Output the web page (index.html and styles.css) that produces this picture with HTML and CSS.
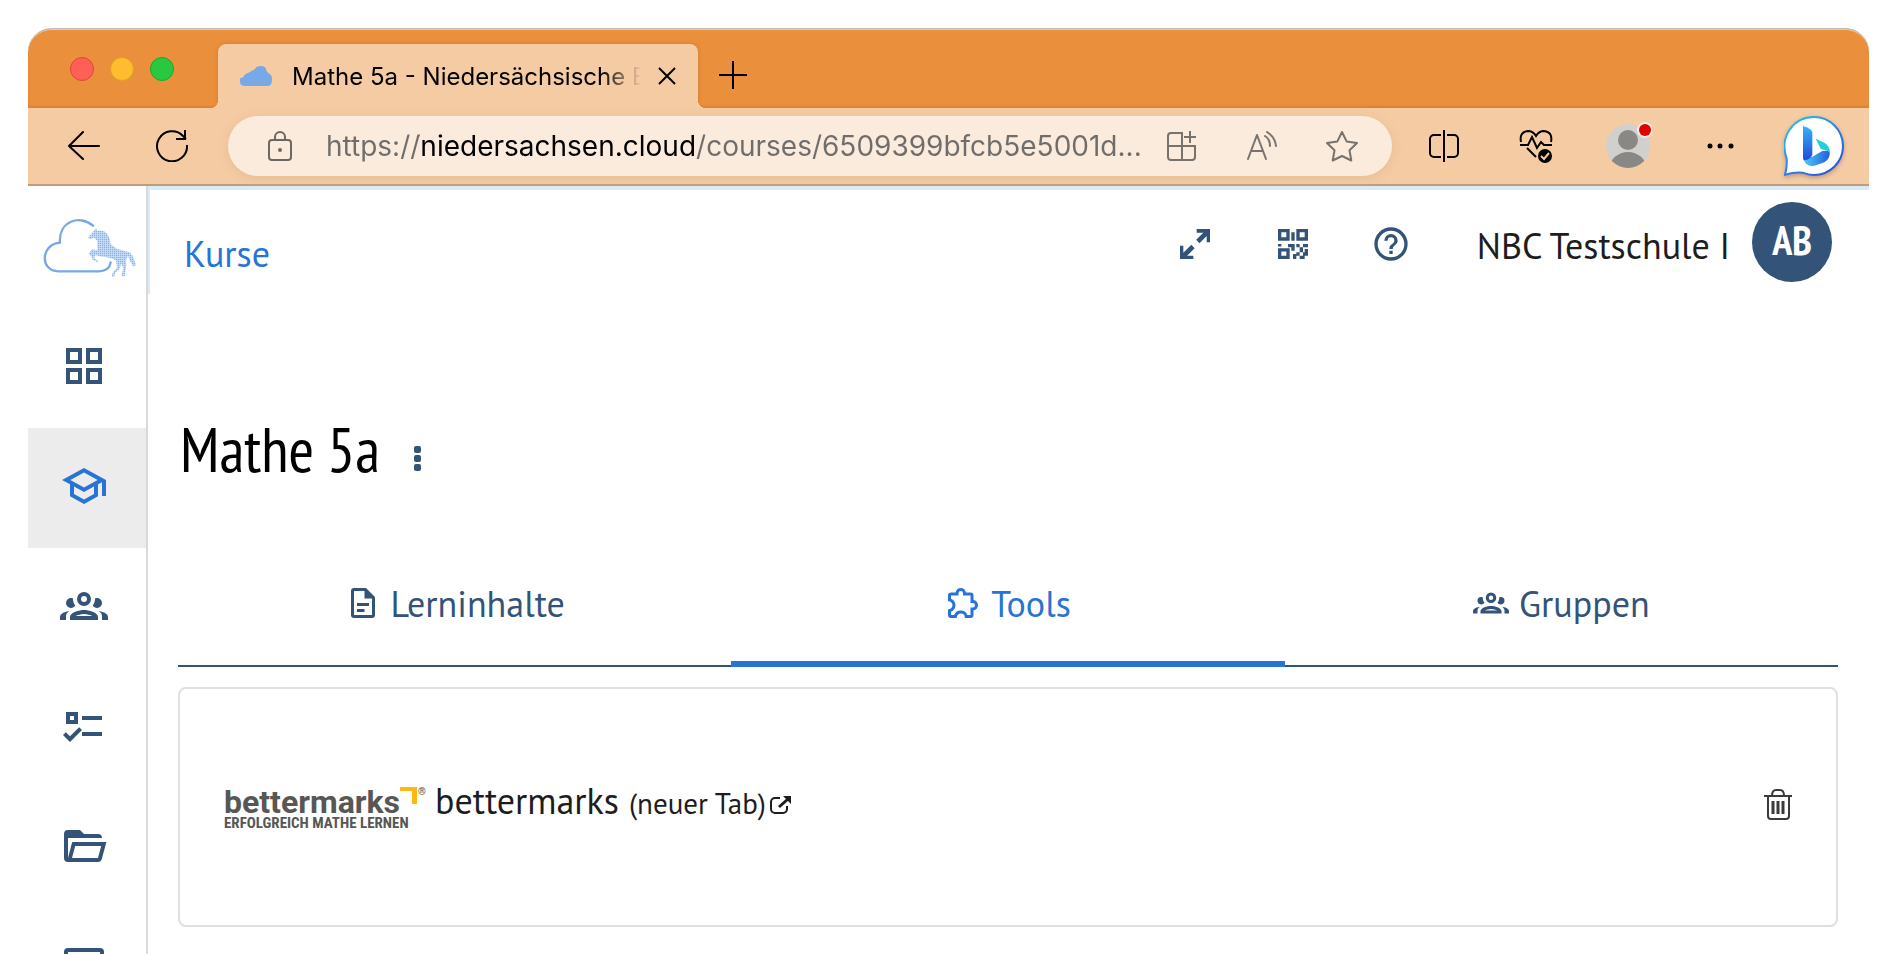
FILE: index.html
```html
<!DOCTYPE html>
<html lang="de">
<head>
    <meta charset="UTF-8">
    <meta name="viewport" content="width=device-width, initial-scale=1.0">
    <title>Mathe 5a - Niedersächsische Bildungscloud</title>
    <link rel="stylesheet" href="styles.css">
</head>
<body>
    <div class="browser">
        <!-- Tab strip -->
        <div class="titlebar">
            <div class="lights">
                <span class="light red"></span>
                <span class="light yellow"></span>
                <span class="light green"></span>
            </div>
            <div class="browser-tab">
                <svg class="favicon" viewBox="0 0 32 20"><path d="M5 20C2 20 0 18.500 0 16V13Q0 11.500 3 11.500Q4 8 9 6.500L15 3Q16 0 21 0Q26 0 26.500 5Q28 7.500 31 9Q32 10 32 13Q32 20 28 20Z" fill="#77a9e6"/></svg>
                <span class="tab-title">Mathe 5a - Niedersächsische Bildungscloud</span>
                <button class="tab-close" aria-label="Tab schließen">
                    <svg width="18" height="18" viewBox="0 0 18 18" fill="none" stroke="#000" stroke-width="2"><path d="M1 1l16 16M17 1L1 17"/></svg>
                </button>
            </div>
            <button class="new-tab" aria-label="Neuer Tab">
                <svg width="28" height="28" viewBox="0 0 28 28" fill="none" stroke="#000" stroke-width="2"><path d="M14 0v28M0 14h28"/></svg>
            </button>
        </div>

        <!-- Address bar -->
        <div class="toolbar">
            <div class="nav-buttons">
                <button class="tool" aria-label="Zurück">
                    <svg width="32" height="30" viewBox="0 0 32 30" fill="none" stroke="#000" stroke-width="2" stroke-linecap="round" stroke-linejoin="round"><path d="M31 15H1M15 1L1 15l14 13"/></svg>
                </button>
                <button class="tool" aria-label="Neu laden">
                    <svg width="32" height="32" viewBox="0 0 32 32" fill="none" stroke="#000" stroke-width="2"><path d="M31 15a15 15 0 1 1-4-9l3 3M29 0v9h-9"/></svg>
                </button>
            </div>
            <div class="address">
                <svg width="24" height="30" viewBox="0 0 24 30" fill="none" stroke="#6b6863" stroke-width="2"><rect x="1" y="9" width="22" height="20" rx="3"/><path d="M7 9V6a5 5 0 0 1 10 0v3"/><circle cx="12" cy="19" r="2" fill="#6b6863" stroke="none"/></svg>
                <input class="url" type="text" aria-label="Adresse" value="https://niedersachsen.cloud/courses/6509399bfcb5e5001d...">
                <button class="tool" aria-label="App verfügbar">
                    <svg width="30" height="30" viewBox="0 0 30 30" fill="none" stroke="#76726d" stroke-width="2"><path d="M15 29V2H4a3 3 0 0 0-3 3v21a3 3 0 0 0 3 3h21a3 3 0 0 0 3-3V15H1M23 0v12M17 6h12"/></svg>
                </button>
                <button class="tool" aria-label="Laut vorlesen">
                    <svg width="30" height="30" viewBox="0 0 30 30" fill="none" stroke="#76726d" stroke-width="2" stroke-linecap="round" stroke-linejoin="round"><path d="M1 28L10 4l9 24M4 20h12M18 5q5 3 5 10M20 1q8 5 9 14"/></svg>
                </button>
                <button class="tool" aria-label="Favorit">
                    <svg width="34" height="32" viewBox="0 0 34 32" fill="none" stroke="#76726d" stroke-width="2" stroke-linejoin="round"><path d="M17 2l4.600 9.400L32 13l-7.500 7.300L26.300 30.500 17 26l-9.300 4.500 1.800-10.200L2 13l10.400-1.600z"/></svg>
                </button>
            </div>
            <div class="extras">
                <button class="tool" aria-label="Geteilter Bildschirm">
                    <svg width="30" height="32" viewBox="0 0 30 32" fill="none" stroke="#000" stroke-width="2"><path d="M15 0v32M12 5H5a4 4 0 0 0-4 4v14a4 4 0 0 0 4 4h7M18 5h7a4 4 0 0 1 4 4v14a4 4 0 0 1-4 4h-7"/></svg>
                </button>
                <button class="tool" aria-label="Browser-Essentials">
                    <svg width="34" height="34" viewBox="0 0 34 34" fill="none" stroke="#000" stroke-width="2"><path d="M2 13Q0 3 9 2q5 0 8 5 3-5 8-5 9 1 7 11M1 16h8l4-8 5 11 4-6 3 3h8M8 19l9 9"/><circle cx="26" cy="27" r="7" fill="#000" stroke="none"/><path d="M22 27l3 3 5-6" stroke="#f5cba4"/></svg>
                </button>
                <button class="tool" aria-label="Profil">
                    <svg width="48" height="48" viewBox="0 0 48 48"><defs><clipPath id="face"><circle cx="24" cy="24" r="22"/></clipPath></defs><circle cx="24" cy="24" r="22" fill="#d2d0cc"/><g clip-path="url(#face)" fill="#8a8884"><circle cx="24" cy="18" r="10"/><ellipse cx="24" cy="45" rx="18" ry="15"/></g><circle cx="41" cy="8" r="8" fill="#f4ece6"/><circle cx="41" cy="8" r="6" fill="#e30000"/></svg>
                </button>
                <button class="tool" aria-label="Menü">
                    <svg width="28" height="6" viewBox="0 0 28 6"><circle cx="4" cy="3" r="2.500"/><circle cx="14" cy="3" r="2.500"/><circle cx="25" cy="3" r="2.500"/></svg>
                </button>
                <button class="tool bing" aria-label="Bing">
                    <svg width="60" height="60" viewBox="0 0 180 180">
                        <defs>
                            <linearGradient id="rim" x1="0" y1="0" x2="1" y2="1"><stop offset="0" stop-color="#1fd0ea"/><stop offset=".5" stop-color="#2f80ee"/><stop offset="1" stop-color="#1c4fd8"/></linearGradient>
                            <linearGradient id="stem" x1="0" y1="0" x2="0" y2="1"><stop offset="0" stop-color="#37b4f8"/><stop offset="1" stop-color="#2048d8"/></linearGradient>
                            <linearGradient id="bowl" x1="0" y1="0" x2="1" y2="0"><stop offset="0" stop-color="#50c8f8"/><stop offset="1" stop-color="#2060e0"/></linearGradient>
                        </defs>
                        <path d="M3 176Q10 152 8 128C-16 60 30 3 90 3c48 0 87 39 87 87s-39 87-87 87Q72 177 56 170 30 168 3 176z" fill="#fff" stroke="url(#rim)" stroke-width="6"/>
                        <path d="M60 128l25-6 30-17 22 0q4 22-16 34L96 148q-30 8-38-20z" fill="url(#bowl)"/>
                        <path d="M57 30q24 8 28 18v68q-4 12-22 17-6 0-6-7z" fill="url(#stem)"/>
                        <path d="M95 68l26 12q18 10 17 34-5-10-16-11l-12-5z" fill="#23cfdf"/>
                    </svg>
                </button>
            </div>
        </div>

        <!-- Page -->
        <div class="page">
            <nav class="sidebar">
                <a class="logo" href="#" aria-label="Startseite">
                    <svg width="95" height="61" viewBox="66 108 285 183">
                        <defs><pattern id="dots" width="6" height="6" patternUnits="userSpaceOnUse"><rect width="6" height="6" fill="#d3e4f9"/><rect width="4" height="4" fill="#86b2ea"/></pattern></defs>
                        <path d="M219 134C180 100 115 120 120 185C60 190 60 271 115 271H235Q268 271 272 244" fill="none" stroke="#77a9e6" stroke-width="7" stroke-linecap="round"/>
                        <path d="M204 170L216 155 228 142 232 149Q254 146 262 160 272 174 272 190L290 203 316 211 328 213 338 224 348 252 340 257 330 240 324 224 318 238 319 252 314 286H304L310 262 303 247 300 262 286 275 282 287H275L278 275 291 260 288 238 268 230 240 226 226 222 222 232 236 241 232 243 218 236 214 226 206 218 216 205 232 208V180L222 170 210 175z" fill="url(#dots)"/>
                    </svg>
                </a>
                <a class="nav-item" href="#" aria-label="Übersicht"><svg viewBox="0 0 24 24"><path d="M3 11h8V3H3zm2-6h4v4H5zM13 3v8h8V3zm6 6h-4V5h4zM3 21h8v-8H3zm2-6h4v4H5zM13 21h8v-8h-8zm2-6h4v4h-4z"/></svg></a>
                <a class="nav-item active" href="#" aria-label="Kurse"><svg viewBox="0 0 24 24"><path d="M12 3 1 9l4 2.180v6L12 21l7-3.820v-6l2-1.090V17h2V9L12 3m6.820 6L12 12.720 5.180 9 12 5.280 18.820 9M17 16l-5 2.720L7 16v-3.730L12 15l5-2.730V16z"/></svg></a>
                <a class="nav-item" href="#" aria-label="Teams"><svg viewBox="0 0 24 24"><use href="#group"/></svg></a>
                <a class="nav-item" href="#" aria-label="Aufgaben"><svg viewBox="0 0 24 24"><path d="M3 5h6v6H3V5m2 2v2h2V7H5m6 0h10v2H11V7m0 8h10v2H11v-2m-6 5-3.500-3.500 1.410-1.410L5 17.170l4.590-4.580L11 14l-6 6z"/></svg></a>
                <a class="nav-item" href="#" aria-label="Dateien"><svg viewBox="0 0 24 24"><path d="M6.100 10 4 18V8h17a2 2 0 0 0-2-2h-7l-2-2H4a2 2 0 0 0-2 2v12a2 2 0 0 0 2 2h15c.9 0 1.700-.6 1.900-1.500L23.200 10H6.100M19 18H6l1.600-6h13L19 18z"/></svg></a>
                <a class="nav-item" href="#" aria-label="Neuigkeiten"><svg viewBox="0 0 24 24"><path d="M4 3h16a2 2 0 0 1 2 2v14a2 2 0 0 1-2 2H4a2 2 0 0 1-2-2V5a2 2 0 0 1 2-2m0 2v14h16V5z"/></svg></a>
            </nav>

            <main class="main">
                <header class="topbar">
                    <a class="breadcrumb" href="#">Kurse</a>
                    <div class="top-actions">
                        <button class="action" aria-label="Vollbild"><svg viewBox="0 0 24 24"><path d="M13 3H21v8h-2V7.200L14.700 11.500l-2-2L17 5.200H13zM3 13h2v4.300l4.800-4.800 2 2L7.300 19H11v2H3z"/></svg></button>
                        <button class="action" aria-label="QR-Code">
                            <svg viewBox="0 0 24 24"><path fill-rule="evenodd" d="M3 3h7v7H3zm2 2v3h3V5zM14 3h7v7h-7zm2 2v3h3V5zM3 14.500h7V21H3zm2 2V19h3v-2.500zM11 5h2v5h-2zM3 12h2v1.500H3zM9 12h4v4h-2v-2H9zM14 12h2v2h-2zM16 14h2v3h-2zM18 12h3v2h-3zM14 17h2v2h-2v2h-2v-3h2zM18 17h1v-2h2v4h-2v2h-3v-2h2z"/></svg>
                        </button>
                        <button class="action" aria-label="Hilfe"><svg viewBox="0 0 24 24"><path d="M11 18h2v-2h-2v2m1-16a10 10 0 1 0 0 20 10 10 0 0 0 0-20m0 18c-4.410 0-8-3.590-8-8s3.590-8 8-8 8 3.590 8 8-3.590 8-8 8m0-14a4 4 0 0 0-4 4h2a2 2 0 0 1 4 0c0 2-3 1.750-3 5h2c0-2.250 3-2.500 3-5a4 4 0 0 0-4-4z"/></svg></button>
                    </div>
                    <span class="school">NBC Testschule I</span>
                    <button class="avatar">AB</button>
                </header>

                <div class="content">
                    <div class="title-row">
                        <h1>Mathe 5a</h1>
                        <button class="more" aria-label="Kursmenü"><svg width="8" height="26" viewBox="0 0 8 26"><rect width="7" height="7" rx="2"/><rect y="9" width="7" height="7" rx="2"/><rect y="18" width="7" height="7" rx="2"/></svg></button>
                    </div>

                    <div class="tabs" role="tablist">
                        <button class="tab" role="tab"><svg viewBox="0 0 24 24"><path d="M6 2h8l6 6v12a2 2 0 0 1-2 2H6a2 2 0 0 1-2-2V4a2 2 0 0 1 2-2m0 2v16h12V9h-5V4zm2 8h8v2H8zm0 4h5v2H8z"/></svg>Lerninhalte</button>
                        <button class="tab selected" role="tab" aria-selected="true"><svg viewBox="0 0 24 24"><path d="M22 13.500c0 1.760-1.300 3.220-3 3.460V20a2 2 0 0 1-2 2h-3.800v-.3a2.700 2.700 0 0 0-2.700-2.700c-1.500 0-2.700 1.210-2.700 2.700v.3H4a2 2 0 0 1-2-2v-3.800h.3C3.790 16.200 5 15 5 13.500S3.790 10.800 2.300 10.800H2V7a2 2 0 0 1 2-2h3.040C7.280 3.300 8.740 2 10.500 2s3.220 1.300 3.460 3H17a2 2 0 0 1 2 2v3.040c1.700.24 3 1.700 3 3.460M17 15h1.500a1.500 1.500 0 0 0 0-3H17V7h-5V5.500a1.500 1.500 0 0 0-3 0V7H4v2.120c1.760.68 3 2.380 3 4.380s-1.250 3.700-3 4.380V20h2.120a4.700 4.700 0 0 1 8.760 0H17v-5z"/></svg>Tools</button>
                        <button class="tab" role="tab"><svg viewBox="0 0 24 24"><path id="group" d="M12,5A3.5,3.5 0 0,0 8.5,8.5A3.5,3.5 0 0,0 12,12A3.5,3.5 0 0,0 15.5,8.5A3.5,3.5 0 0,0 12,5M12,7A1.5,1.5 0 0,1 13.5,8.5A1.5,1.5 0 0,1 12,10A1.5,1.5 0 0,1 10.5,8.5A1.5,1.5 0 0,1 12,7M5.5,8A2.5,2.5 0 0,0 3,10.5C3,11.44 3.53,12.25 4.29,12.68C4.65,12.88 5.06,13 5.5,13C5.94,13 6.35,12.88 6.71,12.68C7.08,12.47 7.39,12.17 7.62,11.81C6.89,10.86 6.5,9.7 6.5,8.5C6.5,8.41 6.5,8.31 6.5,8.22C6.2,8.08 5.86,8 5.5,8M18.5,8C18.14,8 17.8,8.08 17.5,8.22C17.5,8.31 17.5,8.41 17.5,8.5C17.5,9.7 17.11,10.86 16.38,11.81C16.5,12 16.63,12.15 16.78,12.3C16.94,12.45 17.1,12.58 17.29,12.68C17.65,12.88 18.06,13 18.5,13C18.94,13 19.35,12.88 19.71,12.68C20.47,12.25 21,11.44 21,10.5A2.5,2.5 0 0,0 18.5,8M12,14C9.66,14 5,15.17 5,17.5V19H19V17.5C19,15.17 14.34,14 12,14M4.71,14.55C2.78,14.78 0,15.76 0,17.5V19H3V17.07C3,16.06 3.69,15.22 4.71,14.55M19.29,14.55C20.31,15.22 21,16.06 21,17.07V19H24V17.5C24,15.76 21.22,14.78 19.29,14.55M12,16C13.53,16 15.24,16.5 16.23,17H7.77C8.76,16.5 10.47,16 12,16Z"/></svg>Gruppen</button>
                    </div>

                    <div class="tool-card">
                        <a class="tool-link" href="#">
                            <span class="brand">
                                <span class="brand-name">bettermarks<svg class="corner" width="18" height="18" viewBox="0 0 18 18"><path d="M0 0h17v17h-5V4H0z" fill="#fdb913"/></svg><span class="reg">®</span></span>
                                <span class="brand-claim">ERFOLGREICH MATHE LERNEN</span>
                            </span>
                            <span class="tool-name">bettermarks</span>
                            <span class="tool-hint">(neuer Tab)</span>
                            <svg width="22" height="18" viewBox="0 0 22 18" fill="none" stroke="#1d1d1d" stroke-width="2"><path d="M10 2H5a4 4 0 0 0-4 4v7a4 4 0 0 0 4 4h8a4 4 0 0 0 4-4v-3"/><path d="M9 11l9-8" stroke-width="3"/><path d="M13 0h8v8z" fill="#1d1d1d" stroke="none"/></svg>
                        </a>
                        <button class="delete" aria-label="Löschen">
                            <svg width="28" height="32" viewBox="0 0 28 32" fill="none" stroke="#3a3a3a" stroke-width="2"><path d="M0 7h28M8 7q0-6 4-6h4q4 0 4 6M4 7v20a3 3 0 0 0 3 3h15a3 3 0 0 0 3-3V7"/><path d="M9 12v13M14 12v13M19 12v13" stroke-width="3"/></svg>
                        </button>
                    </div>
                </div>
            </main>
        </div>
    </div>
</body>
</html>
```
FILE: styles.css
```css
* {
    box-sizing: border-box;
}

body {
    margin: 0;
    height: 100vh;
    padding: 28px 27px 0 28px;
    overflow: hidden;
    background-color: #fff;
    color: #1d1d1d;
    font-family: 'PT Sans', 'Open Sans', sans-serif;
}

button {
    display: flex;
    align-items: center;
    justify-content: center;
    padding: 0;
    border: none;
    background: none;
    color: inherit;
    font: inherit;
    cursor: pointer;
}

a {
    color: inherit;
    text-decoration: none;
}

.browser {
    display: flex;
    flex-direction: column;
    height: 100%;
}

/* Tab strip */
.titlebar {
    display: flex;
    flex-shrink: 0;
    height: 80px;
    padding-left: 42px;
    border-top: 1px solid #c0bab5;
    border-radius: 24px 24px 0 0;
    background-color: #ea8f3c;
    box-shadow: inset 0 1px 0 #f5c79b, inset 0 -2px 2px #d98337;
}

.lights {
    display: flex;
    gap: 16px;
    margin-right: 44px;
    padding-top: 28px;
}

.light {
    width: 24px;
    height: 24px;
    border: 1px solid;
    border-radius: 50%;
}

.red {
    background-color: #ff5f57;
    border-color: #e0443e;
}

.yellow {
    background-color: #febc2e;
    border-color: #dea123;
}

.green {
    background-color: #28c840;
    border-color: #1aab29;
}

.browser-tab {
    position: relative;
    display: flex;
    align-items: center;
    align-self: flex-end;
    width: 480px;
    height: 64px;
    padding: 0 22px;
    border-radius: 8px 8px 0 0;
    background-color: #f5cba4;
    box-shadow: 0 0 4px #cf7d34;
    clip-path: inset(-4px -8px 0 -8px);
}

/* flared feet of the active tab */
.browser-tab::before,
.browser-tab::after {
    content: '';
    position: absolute;
    bottom: 0;
    width: 8px;
    height: 8px;
}

.browser-tab::before {
    right: 100%;
    background: radial-gradient(circle at 0 0, transparent 8px, #f5cba4 8px);
}

.browser-tab::after {
    left: 100%;
    background: radial-gradient(circle at 100% 0, transparent 8px, #f5cba4 8px);
}

.favicon {
    flex-shrink: 0;
    width: 32px;
    height: 20px;
    margin-right: 20px;
}

.tab-title {
    flex: 1;
    overflow: hidden;
    color: #000;
    font-family: Inter, 'Liberation Sans', sans-serif;
    font-size: 24px;
    white-space: nowrap;
    mask-image: linear-gradient(to right, #000 calc(100% - 40px), transparent);
}

.tab-close {
    margin-left: 17px;
}

.new-tab {
    margin: 16px 0 0 21px;
    height: 60px;
}

/* Address bar */
.toolbar {
    display: flex;
    flex-shrink: 0;
    align-items: center;
    height: 78px;
    padding: 0 25px 0 32px;
    border-bottom: 2px solid #bf9c7c;
    background-color: #f5cba4;
}

.tool {
    flex-shrink: 0;
    width: 48px;
    height: 48px;
}

.nav-buttons {
    display: flex;
    gap: 40px;
    margin-right: 32px;
}

.address {
    display: flex;
    flex: 1;
    align-items: center;
    gap: 32px;
    height: 60px;
    padding: 0 26px 0 40px;
    border-radius: 30px;
    background-color: #fbebdd;
    box-shadow: 0 2px 12px #e6bc94;
}

/* the host part of the address is darker than the rest */
.url {
    flex: 1;
    min-width: 0;
    margin: 0 -16px 0 2px;
    padding: 0;
    border: none;
    outline: none;
    background: linear-gradient(to right, #6f6d6b 93px, #000 93px, #000 369px, #6f6d6b 369px);
    background-clip: text;
    color: transparent;
    font-family: Inter, 'Liberation Sans', sans-serif;
    font-size: 28px;
}

.extras {
    display: flex;
    align-items: center;
    gap: 44px;
    margin-left: 28px;
}

.bing {
    width: 60px;
    height: 60px;
    margin-left: -4px;
    filter: drop-shadow(0 2px 2px #c09a78);
}

/* Page */
.page {
    display: flex;
    flex: 1;
    min-height: 0;
    overflow: hidden;
}

.sidebar {
    flex-shrink: 0;
    width: 120px;
    border-right: 2px solid #d9d9d9;
}

.logo {
    display: flex;
    align-items: center;
    height: 122px;
    padding-left: 14px;
}

.nav-item {
    display: flex;
    align-items: center;
    justify-content: center;
    height: 120px;
    padding: 0 6px 4px 0;
    color: #335379;
}

.nav-item svg {
    width: 48px;
    height: 48px;
    fill: currentColor;
}

.nav-item.active {
    background-color: #ececec;
    color: #2774d6;
}

.main {
    flex: 1;
    border-top: 4px solid #d9ebf7;
}

.topbar {
    display: flex;
    align-items: center;
    height: 104px;
    padding: 0 37px 0 34px;
    border-left: 2px solid #d9ebf7;
    font-size: 36px;
}

.breadcrumb {
    padding-top: 22px;
    color: #2774d6;
}

.top-actions {
    display: flex;
    gap: 58px;
    margin-left: auto;
    padding-top: 4px;
    color: #335379;
}

.action svg {
    width: 40px;
    height: 40px;
    fill: currentColor;
}

.school {
    margin: 0 22px 0 66px;
    padding-top: 6px;
}

.avatar {
    width: 80px;
    height: 80px;
    padding-bottom: 4px;
    border-radius: 50%;
    background-color: #335379;
    color: #fff;
    font-family: 'PT Sans Narrow', 'PT Sans', 'Open Sans', sans-serif;
    font-size: 40px;
    font-weight: bold;
}

.content {
    padding: 0 31px 0 30px;
}

.title-row {
    display: flex;
    align-items: center;
    gap: 34px;
    height: 251px;
    padding: 58px 2px 0;
}

h1 {
    margin: 0;
    color: #000;
    font-family: 'PT Sans Narrow', 'Roboto Condensed', 'Open Sans', sans-serif;
    font-size: 62px;
    font-weight: normal;
}

.more {
    padding-top: 20px;
    fill: #335379;
}

.tabs {
    display: grid;
    grid-template-columns: repeat(3, 1fr);
    box-shadow: inset 0 -2px 0 #335379;
}

.tab {
    gap: 10px;
    height: 122px;
    border-bottom: 6px solid transparent;
    color: #335379;
    font-size: 36px;
}

.tab svg {
    width: 36px;
    height: 36px;
    fill: currentColor;
}

.tab.selected {
    border-bottom-color: #2774d6;
    color: #2774d6;
}

.tool-card {
    display: flex;
    align-items: center;
    justify-content: space-between;
    height: 240px;
    margin-top: 20px;
    padding: 0 44px;
    border: 2px solid #e0e0e0;
    border-radius: 8px;
}

.tool-link {
    display: flex;
    align-items: baseline;
    padding-bottom: 8px;
}

.brand {
    display: flex;
    flex-direction: column;
    align-self: center;
    width: 200px;
    margin-right: 11px;
    padding-top: 10px;
    color: #575756;
    font-weight: bold;
}

.brand-name {
    display: flex;
    font-family: Roboto, 'Liberation Sans', sans-serif;
    font-size: 32px;
    line-height: 30px;
}

.corner {
    flex-shrink: 0;
}

.reg {
    font-size: 10px;
    line-height: 10px;
}

.brand-claim {
    font-family: 'Roboto Condensed', Roboto, sans-serif;
    font-size: 15px;
    line-height: 12px;
    white-space: nowrap;
}

.tool-name {
    margin-right: 10px;
    font-size: 36px;
}

.tool-hint {
    margin-right: 4px;
    font-size: 29px;
}

.delete {
    padding-bottom: 4px;
}
```
